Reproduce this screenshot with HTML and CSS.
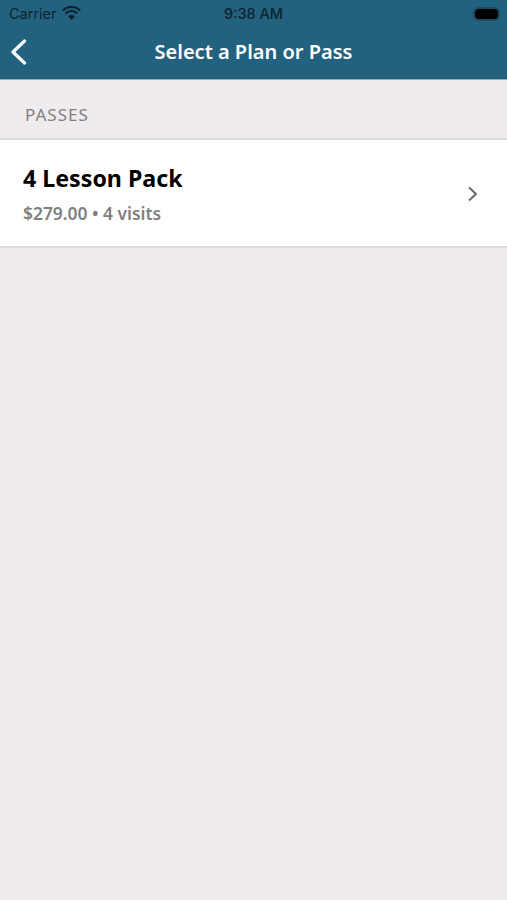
FILE: index.html
```html
<!DOCTYPE html>
<html lang="en">
<head>
  <meta charset="UTF-8">
  <meta name="viewport" content="width=device-width, initial-scale=1.0">
  <title>Select a Plan or Pass</title>
  <link rel="stylesheet" href="styles.css">
</head>
<body>
  <header class="header">
    <div class="status-bar">
      <div class="status-left">
        <span>Carrier</span>
        <svg class="wifi-icon" width="19" height="14" viewBox="0 0 19 14">
          <path d="M9.5 14 6 10.4a5 5 0 0 1 7 0z" fill="#0d2330"/>
          <path d="M3.6 7.4a8.4 8.4 0 0 1 11.8 0" fill="none" stroke="#0d2330" stroke-width="2.1"/>
          <path d="M.8 4.4a12.4 12.4 0 0 1 17.4 0" fill="none" stroke="#0d2330" stroke-width="2.1"/>
        </svg>
      </div>
      <span class="status-time">9:38 AM</span>
      <div class="battery"><div class="battery-fill"></div></div>
    </div>
    <div class="nav-bar">
      <svg class="back-icon" width="17" height="26" viewBox="0 0 17 26">
        <path d="M14.5 2 3 13l11.5 11" fill="none" stroke="#fff" stroke-width="3.2" stroke-linecap="round" stroke-linejoin="round"/>
      </svg>
      <h1 class="nav-title">Select a Plan or Pass</h1>
    </div>
  </header>

  <main>
    <h2 class="section-label">PASSES</h2>
    <div class="pass-row">
      <div class="pass-info">
        <div class="pass-name">4 Lesson Pack</div>
        <div class="pass-meta">$279.00 • 4 visits</div>
      </div>
      <svg class="chevron" width="11" height="16" viewBox="0 0 11 16">
        <path d="M2 1.5 9 8l-7 6.5" fill="none" stroke="#666" stroke-width="1.9"/>
      </svg>
    </div>
  </main>
</body>
</html>
```

FILE: styles.css
```css
:root {
  --header-bg: #22627f;
  --page-bg: #f0ebee;
  --border: #dcdadc;
  --text-muted: #808080;
}

body {
  margin: 0;
  min-height: 100vh;
  background: var(--page-bg);
  font-family: 'Noto Sans', sans-serif;
}

.header {
  height: 79px;
  background: var(--header-bg);
  border-bottom: 1px solid #8fb1bf;
}

.status-bar {
  display: flex;
  align-items: center;
  justify-content: space-between;
  height: 27px;
  padding: 0 9px;
  color: #0d2330;
  font-family: 'Inter', sans-serif;
  font-size: 14.5px;
}

.status-left {
  display: flex;
  align-items: center;
  gap: 5px;
  width: 120px;
}

.wifi-icon {
  margin-top: -1px;
}

.status-time {
  font-weight: 500;
}

.battery {
  display: flex;
  justify-content: flex-end;
  width: 120px;
}

.battery-fill {
  width: 23px;
  height: 10px;
  border-radius: 4px;
  background: #000;
  box-shadow: 0 0 0 2px #1b4a63;
}

.nav-bar {
  position: relative;
  display: flex;
  align-items: center;
  justify-content: center;
  height: 50px;
}

.back-icon {
  position: absolute;
  left: 10px;
  top: 12px;
}

.nav-title {
  margin: 0 0 2px;
  color: #fff;
  font-size: 20px;
  font-weight: 600;
}

.section-label {
  margin: 0;
  padding: 24px 25px 0;
  height: 34px;
  color: var(--text-muted);
  font-size: 17px;
  letter-spacing: 1px;
  line-height: 22px;
  font-weight: 400;
  border-bottom: 2px solid var(--border);
}

.pass-row {
  display: flex;
  align-items: center;
  justify-content: space-between;
  height: 104px;
  padding: 2px 29px 0 23px;
  background: #fff;
  border-bottom: 2px solid var(--border);
}

.pass-info {
  margin-bottom: 1px;
}

.pass-name {
  color: #000;
  font-size: 23.2px;
  font-weight: 700;
  line-height: 30px;
}

.pass-meta {
  margin-top: 9px;
  color: var(--text-muted);
  font-size: 17.4px;
  font-weight: 600;
  line-height: 22px;
}
```
